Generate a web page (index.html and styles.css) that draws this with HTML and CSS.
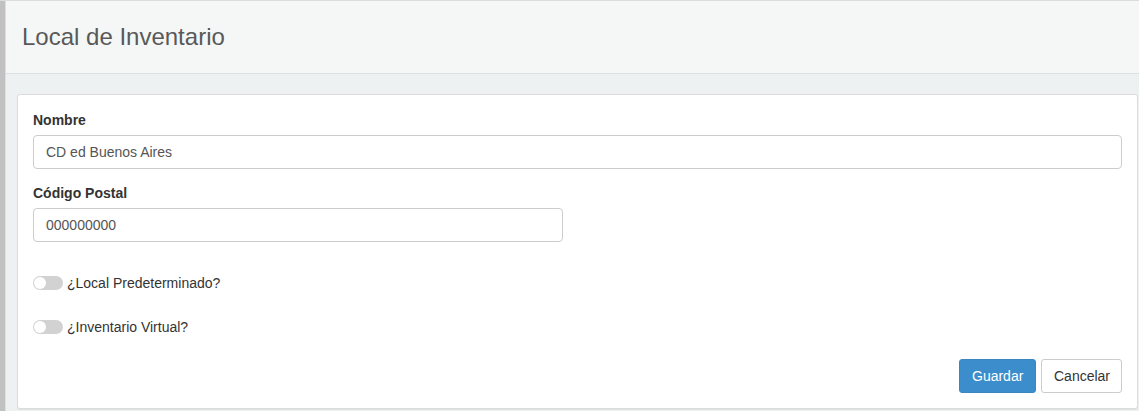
FILE: index.html
```html
<!DOCTYPE html>
<html lang="es">
<head>
<meta charset="utf-8">
<title>Local de Inventario</title>
<link rel="stylesheet" href="styles.css">
</head>
<body>
<div class="frame">
  <div class="sidebar-edge"></div>
  <div class="main">
    <div class="content-header">
      <h1 class="title">Local de Inventario</h1>
    </div>
    <div class="content">
      <div class="box">
        <div class="form-group">
          <label class="label">Nombre</label>
          <input class="input" type="text" value="CD ed Buenos Aires">
        </div>
        <div class="form-group">
          <label class="label">Código Postal</label>
          <input class="input input-half" type="text" value="000000000">
        </div>
        <div class="toggle-row first">
          <span class="switch"><span class="knob"></span></span>
          <span class="toggle-text">¿Local Predeterminado?</span>
        </div>
        <div class="toggle-row second">
          <span class="switch"><span class="knob"></span></span>
          <span class="toggle-text">¿Inventario Virtual?</span>
        </div>
        <div class="actions">
          <button class="btn btn-primary" type="button">Guardar</button>
          <button class="btn btn-default" type="button">Cancelar</button>
        </div>
      </div>
    </div>
  </div>
</div>
</body>
</html>
```
FILE: styles.css
```css
* { box-sizing: border-box; }
html, body {
  margin: 0;
  padding: 0;
  height: 100%;
}
body {
  font-family: "Liberation Sans", Arial, Helvetica, sans-serif;
  font-size: 14px;
  line-height: 20px;
  color: #333;
  background: #eef1f2;
  overflow: hidden;
}
.frame {
  display: flex;
  height: 411px;
  border-top: 1px solid #dcdcdc;
}
.sidebar-edge {
  flex: 0 0 6px;
  background: #c1c1c1;
  border-right: 1px solid #dedede;
}
.main {
  flex: 1;
  display: flex;
  flex-direction: column;
  background: #eef1f2;
}
.content-header {
  height: 73px;
  background: #f5f7f7;
  border-bottom: 1px solid #dde1e2;
  padding: 0 16px;
  display: flex;
  align-items: center;
}
.title {
  margin: 0;
  font-size: 24px;
  font-weight: normal;
  color: #595959;
  line-height: 28px;
}
.content {
  padding: 20px 1px 0 11px;
}
.box {
  display: flex;
  flex-direction: column;
  background: #fff;
  border: 1px solid #dcdcdc;
  border-radius: 3px;
  padding: 15px;
  box-shadow: 0 1px 1px rgba(0,0,0,0.06);
}
.form-group {
  margin-bottom: 15px;
}
.form-group + .form-group {
  margin-top: -1px;
}
.label {
  display: block;
  font-weight: bold;
  margin-bottom: 5px;
  color: #333;
}
.input {
  display: block;
  width: 100%;
  height: 34px;
  padding: 6px 12px;
  font-family: inherit;
  font-size: 14px;
  color: #555;
  background: #fff;
  border: 1px solid #ccc;
  border-radius: 4px;
  outline: none;
}
.input-half {
  width: 530px;
}
.toggle-row {
  display: flex;
  align-items: center;
  height: 20px;
  gap: 4px;
}
.toggle-row.first { margin-top: 16px; }
.toggle-row.second { margin-top: 24px; }
.switch {
  position: relative;
  width: 30px;
  height: 14px;
  border-radius: 7px;
  background: #d2d2d2;
  display: inline-block;
}
.knob {
  position: absolute;
  left: 1px;
  top: 1px;
  width: 12px;
  height: 12px;
  border-radius: 50%;
  background: #fff;
}
.toggle-text {
  color: #333;
}
.actions {
  display: flex;
  justify-content: flex-end;
  gap: 5px;
  margin-top: 22px;
}
.btn {
  height: 34px;
  padding: 6px 12px;
  font-family: inherit;
  font-size: 14px;
  line-height: 20px;
  border-radius: 3px;
  border: 1px solid transparent;
  cursor: pointer;
}
.btn-primary {
  background: #3c8dcb;
  border-color: #3a86c0;
  color: #fff;
  width: 77px;
}
.btn-default {
  background: #fff;
  border-color: #ccc;
  color: #333;
  width: 81px;
}
```
